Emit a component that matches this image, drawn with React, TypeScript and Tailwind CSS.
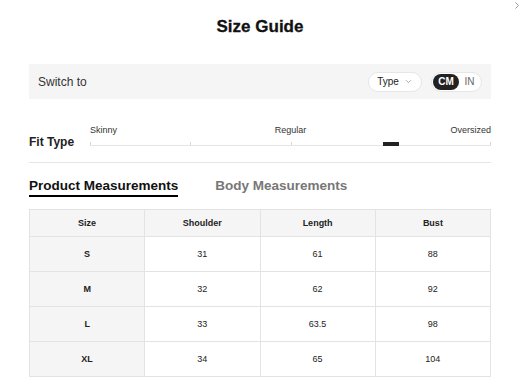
import { ChevronDown } from "lucide-react";

const rows = [
  { size: "S", shoulder: "31", length: "61", bust: "88" },
  { size: "M", shoulder: "32", length: "62", bust: "92" },
  { size: "L", shoulder: "33", length: "63.5", bust: "98" },
  { size: "XL", shoulder: "34", length: "65", bust: "104" },
];

const FitSlider = () => (
  <div className="flex-1 flex flex-col">
    <div className="grid grid-cols-3 text-[9px] leading-[11px] text-[#333] mb-[5px]">
      <span className="text-left">Skinny</span>
      <span className="text-center">Regular</span>
      <span className="text-right">Oversized</span>
    </div>
    <div className="relative h-[5px] border-b border-[#e5e5e5]">
      <span className="absolute left-0 bottom-0 w-px h-[3px] bg-[#d6d6d6]" />
      <span className="absolute left-1/4 bottom-0 w-px h-[3px] bg-[#d6d6d6]" />
      <span className="absolute left-1/2 bottom-0 w-px h-[3px] bg-[#d6d6d6]" />
      <span className="absolute right-0 bottom-0 w-px h-[3px] bg-[#d6d6d6]" />
      <span className="absolute left-3/4 -translate-x-1/2 -bottom-px w-[16px] h-[4px] bg-[#222]" />
    </div>
  </div>
);

export default function App() {
  return (
    <div className="relative w-[520px] h-[381px] overflow-hidden bg-white text-[#222] font-['Liberation_Sans',Arial,sans-serif]">
      <svg className="absolute top-[2px] right-[1px] w-[4px] h-[7px]" viewBox="0 0 4 7" fill="none">
        <polyline points="0.5,0.5 3.5,3.5 0.5,6.5" stroke="#999" strokeWidth="1" />
      </svg>

      <div className="px-[29px]">
        <h1 className="pt-[17px] text-center text-[17px] leading-[20px] font-black text-[#111] [-webkit-text-stroke:0.3px_#111]">Size Guide</h1>

        <div className="mt-[27px] h-[35px] bg-[#f5f5f5] flex items-center justify-between pl-[9px] pr-[9px]">
          <span className="text-[12px] text-[#333]">Switch to</span>
          <div className="flex items-center gap-[9px]">
            <button className="h-[20px] w-[54px] rounded-full bg-white border border-[#e6e6e6] flex items-center justify-center gap-[5px] text-[10px] text-[#222]">
              Type
              <ChevronDown className="w-[9px] h-[9px] text-[#555]" strokeWidth={1.25} />
            </button>
            <div className="h-[20px] w-[51px] rounded-full bg-white border border-[#e6e6e6] flex items-center p-px">
              <span className="h-full w-[26px] rounded-full bg-[#222] text-white text-[10px] font-bold flex items-center justify-center">CM</span>
              <span className="flex-1 text-center text-[10px] text-[#666]">IN</span>
            </div>
          </div>
        </div>

        <div className="mt-[26px] flex items-end">
          <span className="w-[61px] shrink-0 -mb-[3px] text-[12px] leading-[14px] font-bold text-[#222]">Fit Type</span>
          <FitSlider />
        </div>

        <div className="mt-[16px] h-px bg-[#e5e5e5]" />

        <div className="mt-[15px] flex gap-[37px] text-[13.5px] leading-[16px] font-bold">
          <span className="pb-px border-b-2 border-black text-[#111]">Product Measurements</span>
          <span className="text-[#777]">Body Measurements</span>
        </div>

        <table className="mt-[12px] w-full table-fixed border-collapse text-[9px] text-[#222]">
          <thead>
            <tr className="h-[27px] bg-[#f5f5f5]">
              <th className="border border-[#e3e3e3] pt-[2px] font-bold">Size</th>
              <th className="border border-[#e3e3e3] pt-[2px] font-bold">Shoulder</th>
              <th className="border border-[#e3e3e3] pt-[2px] font-bold">Length</th>
              <th className="border border-[#e3e3e3] pt-[2px] font-bold">Bust</th>
            </tr>
          </thead>
          <tbody>
            {rows.map((r) => (
              <tr key={r.size} className="h-[35px]">
                <td className="border border-[#e3e3e3] bg-[#f5f5f5] pt-[1px] text-center font-bold">{r.size}</td>
                <td className="border border-[#e3e3e3] pt-[1px] text-center">{r.shoulder}</td>
                <td className="border border-[#e3e3e3] pt-[1px] text-center">{r.length}</td>
                <td className="border border-[#e3e3e3] pt-[1px] text-center">{r.bust}</td>
              </tr>
            ))}
          </tbody>
        </table>
      </div>
    </div>
  );
}
